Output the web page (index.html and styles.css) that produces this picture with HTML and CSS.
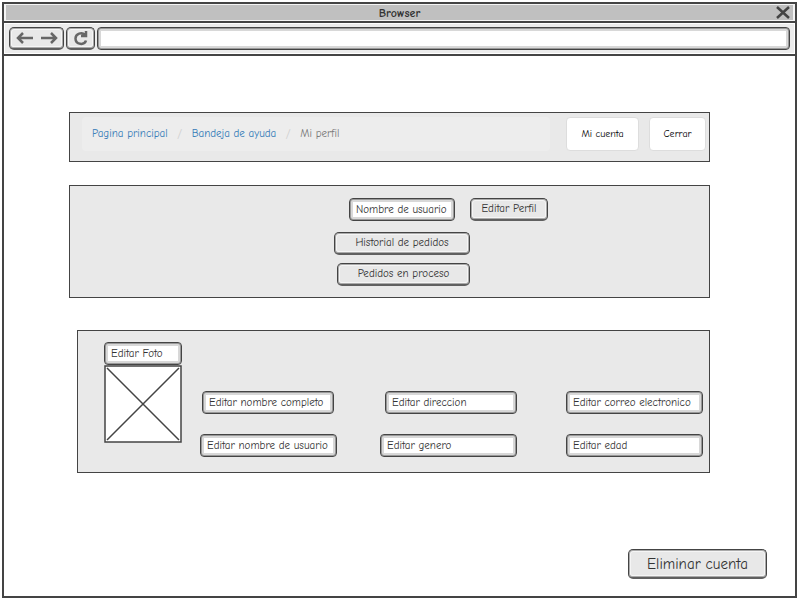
FILE: index.html
```html
<!DOCTYPE html>
<html lang="es">
<head>
<meta charset="utf-8">
<title>Browser</title>
<link rel="stylesheet" href="styles.css">
</head>
<body>
<div class="window">
  <header class="titlebar">
    <span class="title">Browser</span>
    <button class="close" type="button" aria-label="X">
      <svg width="14" height="13" viewBox="0 0 14 13"><path d="M1 1 L13 12 M13 1 L1 12"/></svg>
    </button>
  </header>
  <div class="toolbar">
    <div class="sketch-button history">
      <button class="icon" type="button" aria-label="←">
        <svg width="18" height="14" viewBox="0 0 18 14"><path d="M17 7 H2 M7 2 L2 7 L7 12"/></svg>
      </button>
      <button class="icon" type="button" aria-label="→">
        <svg width="18" height="14" viewBox="0 0 18 14"><path d="M1 7 H16 M11 2 L16 7 L11 12"/></svg>
      </button>
    </div>
    <button class="sketch-button reload" type="button" aria-label="↻">
      <svg width="16" height="16" viewBox="0 0 16 16"><path d="M12 5 C9 1.500 2.500 3.500 2.500 8.500 C2.500 15 11.500 15.500 13 10.500 M13 1 V6 H8"/></svg>
    </button>
    <input class="sketch-field address" type="text" aria-label="URL">
  </div>

  <main class="page">
    <section class="panel top">
      <nav class="breadcrumb">
        <a href="#">Pagina principal</a>
        <span class="slash">/</span>
        <a href="#">Bandeja de ayuda</a>
        <span class="slash">/</span>
        <span class="current">Mi perfil</span>
      </nav>
      <button class="card-button account" type="button">Mi cuenta</button>
      <button class="card-button logout" type="button">Cerrar</button>
    </section>

    <section class="panel profile">
      <div class="profile-actions">
        <div class="profile-name">
          <input class="sketch-field" type="text" aria-label="Nombre de usuario" value="Nombre de usuario">
          <button class="sketch-button" type="button">Editar Perfil</button>
        </div>
        <div class="orders">
          <button class="sketch-button" type="button">Historial de pedidos</button>
          <button class="sketch-button active-orders" type="button">Pedidos en proceso</button>
        </div>
      </div>
    </section>

    <section class="panel edit">
      <div class="photo">
        <input class="sketch-field" type="text" aria-label="Editar Foto" value="Editar Foto">
        <svg class="picture" viewBox="0 0 78 78"><rect x="1" y="1" width="76" height="76"/><path d="M3 3 L75 75 M75 3 L3 75"/></svg>
      </div>
      <form class="fields">
        <input class="sketch-field short centered" type="text" aria-label="Editar nombre completo" value="Editar nombre completo">
        <input class="sketch-field short trailing" type="text" aria-label="Editar direccion" value="Editar direccion">
        <input class="sketch-field" type="text" aria-label="Editar correo electronico" value="Editar correo electronico">
        <input class="sketch-field" type="text" aria-label="Editar nombre de usuario" value="Editar nombre de usuario">
        <input class="sketch-field" type="text" aria-label="Editar genero" value="Editar genero">
        <input class="sketch-field" type="text" aria-label="Editar edad" value="Editar edad">
      </form>
    </section>

    <button class="sketch-button delete" type="button">Eliminar cuenta</button>
  </main>
</div>
</body>
</html>
```
FILE: styles.css
```css
* {
  box-sizing: border-box;
}

body {
  margin: 0;
  padding: 2px;
  min-height: 100vh;
  display: flex;
  background: #fff;
}

body,
button,
input {
  font-family: "Comic Sans MS", "Comic Neue", "Open Sans", sans-serif;
  font-size: 11px;
  line-height: 14px;
  color: #333;
}

button {
  margin: 0;
  padding: 0;
  border: 0;
  background: none;
}

svg {
  display: block;
  fill: none;
  stroke: #444;
}

.window {
  flex: 1;
  margin: 0 1px 1px 0;
  border: 2px solid #444;
  display: flex;
  flex-direction: column;
}

.titlebar {
  height: 17px;
  border: 2px solid #f4f4f4;
  border-width: 1px 2px;
  background: #c0c0c0;
  display: grid;
  grid-template-columns: 20px 1fr 20px;
  align-items: center;
}

.title {
  grid-column: 2;
  text-align: center;
  font-size: 12px;
  font-weight: 700;
}

.close {
  justify-self: center;
}

.close svg {
  stroke-width: 2.5;
}

.toolbar {
  display: flex;
  gap: 2px;
  padding: 4px 5px;
  border-top: 2px solid #444;
  border-bottom: 2px solid #444;
  background: #ececec;
  box-shadow: inset 0 0 0 1px #fff;
}

.sketch-button {
  height: 23px;
  border: 1px solid #444;
  border-bottom: 2px solid #606060;
  border-radius: 5px;
  background: #e8e8e8;
  box-shadow: inset 0 0 0 1px #aaa, inset 0 0 0 2px #f5f5f5;
}

.history {
  width: 55px;
  display: flex;
  align-items: center;
  justify-content: center;
  gap: 6px;
}

.toolbar svg {
  stroke: #666;
  stroke-width: 2.5;
}

.reload {
  width: 29px;
  display: flex;
  align-items: center;
  justify-content: center;
}

.sketch-field {
  min-width: 0;
  width: 137px;
  height: 23px;
  padding: 0 6px;
  border: 1px solid #444;
  border-radius: 4px;
  outline: 0;
  background: #fff;
  box-shadow: inset 0 0 0 1px #999, inset 0 0 0 3px #d8d8d8;
}

.address {
  flex: 1;
}

.page {
  flex: 1;
  display: flex;
  flex-direction: column;
  padding: 56px 85px 17px 65px;
}

.panel {
  border: 1px solid #444;
  background: #e9e9e9;
}

.top {
  display: flex;
  align-items: flex-start;
  padding: 4px 3px 10px 12px;
}

.breadcrumb {
  flex: 1;
  display: flex;
  align-items: center;
  height: 34px;
  padding: 0 10px;
  border-radius: 4px;
  background: #ededed;
}

.breadcrumb a {
  color: #337ab7;
  text-decoration: none;
}

.slash {
  width: 24px;
  text-align: center;
  color: #ccc;
}

.current {
  color: #777;
}

.card-button {
  height: 34px;
  border: 1px solid #ddd;
  border-radius: 4px;
  background: #fff;
  font-size: 10px;
  color: #000;
}

.account {
  width: 73px;
  margin: 0 10px 0 16px;
}

.logout {
  width: 57px;
}

.profile {
  display: flex;
  justify-content: center;
  margin-top: 23px;
  padding: 12px 0 11px 103px;
}

.profile-actions {
  width: 214px;
}

.profile-name {
  display: flex;
  justify-content: flex-end;
  gap: 15px;
}

.profile-name .sketch-field {
  width: 106px;
}

.profile-name .sketch-button {
  width: 78px;
}

.orders {
  width: 136px;
  margin-top: 11px;
  display: flex;
  flex-direction: column;
  gap: 8px;
}

.active-orders {
  margin-left: 3px;
}

.edit {
  display: flex;
  align-items: flex-start;
  margin: 32px 0 0 8px;
  padding: 11px 6px 15px 26px;
}

.photo {
  width: 78px;
}

.photo .sketch-field {
  display: block;
  width: 100%;
}

.picture {
  width: 100%;
  fill: #fff;
  stroke-width: 1.5;
}

.fields {
  display: grid;
  grid-template-columns: 180fr 186fr 137px;
  row-gap: 20px;
  flex: 1;
  margin: 49px 0 0 18px;
}

.fields .short {
  width: 132px;
}

.centered {
  margin-left: 2px;
}

.trailing {
  margin-left: 5px;
}

.delete {
  width: 139px;
  height: 30px;
  margin: auto -57px 0 0;
  align-self: flex-end;
  font-size: 15px;
}
```
